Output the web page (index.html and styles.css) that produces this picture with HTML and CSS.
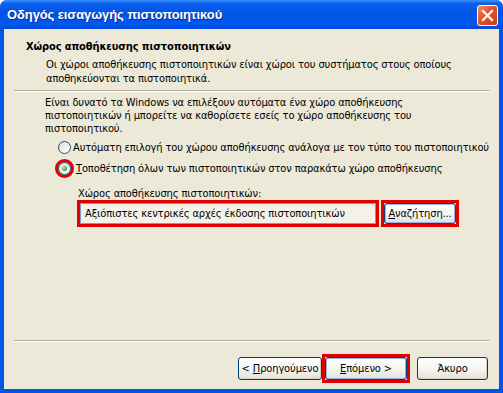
FILE: index.html
```html
<!DOCTYPE html>
<html lang="el">
<head>
  <meta charset="UTF-8">
  <title>Οδηγός εισαγωγής πιστοποιητικού</title>
  <link rel="stylesheet" href="styles.css">
</head>
<body>
  <div class="window">
    <div class="titlebar">
      <span class="title">Οδηγός εισαγωγής πιστοποιητικού</span>
      <span class="close">
        <svg width="13" height="13" viewBox="0 0 13 13">
          <path d="M2 2 L11 11 M11 2 L2 11" stroke="#fff" stroke-width="2.2" stroke-linecap="square"/>
        </svg>
      </span>
    </div>

    <div class="client">
      <div class="header">
        <h1>Χώρος αποθήκευσης πιστοποιητικών</h1>
        <p>Οι χώροι αποθήκευσης πιστοποιητικών είναι χώροι του συστήματος στους οποίους<br>αποθηκεύονται τα πιστοποιητικά.</p>
      </div>
      <div class="sep"></div>

      <div class="body">
        <p>Είναι δυνατό τα Windows να επιλέξουν αυτόματα ένα χώρο αποθήκευσης<br>πιστοποιητικών ή μπορείτε να καθορίσετε εσείς το χώρο αποθήκευσης του<br>πιστοποιητικού.</p>

        <div class="options">
          <label class="option">
            <span class="radio"></span>
            <span>Αυτόματη επιλογή του χώρου αποθήκευσης ανάλογα με τον τύπο του πιστοποιητικού</span>
          </label>
          <label class="option">
            <span class="mark round"><span class="radio checked"></span></span>
            <span><u>Τ</u>οποθέτηση όλων των πιστοποιητικών στον παρακάτω χώρο αποθήκευσης</span>
          </label>
        </div>

        <div class="store">
          <div class="store-label">Χώρος αποθήκευσης πιστοποιητικών:</div>
          <div class="store-row">
            <span class="mark"><span class="field">Αξιόπιστες κεντρικές αρχές έκδοσης πιστοποιητικών</span></span>
            <span class="mark"><button class="btn browse"><u>Α</u>ναζήτηση...</button></span>
          </div>
        </div>
      </div>

      <div class="footer">
        <div class="sep bottom"></div>
        <div class="buttons">
          <button class="btn back">&lt; <u>Π</u>ροηγούμενο</button>
          <span class="mark"><button class="btn next"><u>Ε</u>πόμενο &gt;</button></span>
          <button class="btn cancel">Άκυρο</button>
        </div>
      </div>
    </div>
  </div>
</body>
</html>
```

FILE: styles.css
```css
* {
  box-sizing: border-box;
}
body {
  margin: 0;
  background: #fff;
  font-family: "DejaVu Sans Condensed", "Liberation Sans", sans-serif;
  font-size: 11px;
  letter-spacing: -0.12px;
  color: #000;
}
.window {
  width: 503px;
  height: 393px;
  display: flex;
  flex-direction: column;
  background: #0055ea;
  border-radius: 7px 7px 0 0;
  overflow: hidden;
}
.titlebar {
  height: 29px;
  display: flex;
  align-items: center;
  justify-content: space-between;
  padding: 0 5px 0 7px;
  background: linear-gradient(to bottom, #3d95ff 0%, #0a5fee 12%, #0055e5 45%, #0058ee 85%, #0049d6 100%);
}
.title {
  color: #fff;
  font-family: "Liberation Sans", sans-serif;
  font-weight: bold;
  font-size: 13px;
  letter-spacing: -0.1px;
  text-shadow: 1px 1px 0 #0f2a8a;
}
.close {
  width: 21px;
  height: 21px;
  margin-top: 1px;
  border: 1px solid #fff;
  border-radius: 3px;
  background: linear-gradient(135deg, #f08a6a 0%, #e0542c 45%, #c63d16 100%);
  display: flex;
  align-items: center;
  justify-content: center;
}
.close svg {
  display: block;
}
.client {
  flex: 1;
  margin: 0 4px 4px;
  background: #ece9d8;
  display: flex;
  flex-direction: column;
}
.header {
  padding: 11px 0 0 22px;
}
.header h1 {
  margin: 0;
  font-size: 11px;
  line-height: 14px;
  font-weight: bold;
}
.header p {
  margin: 4px 0 0 20px;
  line-height: 14px;
}
.sep {
  height: 2px;
  margin: 4px 10px 0;
  border-top: 1px solid #aca899;
  border-bottom: 1px solid #fff;
}
.body {
  padding: 4px 0 0 41px;
}
.body p {
  margin: 0;
  line-height: 13px;
}
.options {
  margin: 4px 0 0 13px;
  display: flex;
  flex-direction: column;
  gap: 5px;
}
.option {
  display: flex;
  align-items: center;
  gap: 2px;
  height: 16px;
  white-space: nowrap;
}
.radio {
  width: 13px;
  height: 13px;
  border-radius: 50%;
  border: 1px solid #1c5180;
  background: linear-gradient(135deg, #dcdbd3 0%, #f4f3ee 60%, #fff 100%);
  display: flex;
  align-items: center;
  justify-content: center;
  flex: none;
}
.radio.checked::after {
  content: "";
  width: 5px;
  height: 5px;
  border-radius: 50%;
  background: radial-gradient(circle at 35% 35%, #a4f0a0 0%, #38b33c 60%, #21a121 100%);
}
.mark {
  display: inline-flex;
  border: 3px solid #e00000;
}
.mark.round {
  border-radius: 50%;
  margin-left: -3px;
}
.store {
  margin: 11px 0 0 33px;
}
.store-label {
  line-height: 13px;
}
.store-row {
  margin: 0 0 0 -1px;
  display: flex;
  gap: 2px;
}
.field {
  width: 296px;
  height: 21px;
  border: 1px solid #7f9db9;
  background: #f4f2e8;
  padding: 0 4px;
  line-height: 19px;
  white-space: nowrap;
}
.btn {
  font-family: inherit;
  font-size: 11px;
  letter-spacing: -0.12px;
  color: #000;
  height: 21px;
  padding: 0;
  border: 1px solid #003c74;
  border-radius: 3px;
  background: linear-gradient(to bottom, #ffffff 0%, #f3f3ef 60%, #e2e0d6 100%);
  box-shadow: inset -1px -1px 0 #d6d0c5;
}
.browse {
  width: 72px;
  border-color: #1c3a78;
  box-shadow: inset 0 0 0 1px #98b4e4;
}
.footer {
  margin-top: auto;
  padding-bottom: 6px;
}
.sep.bottom {
  margin: 0 10px;
}
.buttons {
  display: flex;
  align-items: center;
  justify-content: flex-end;
  padding: 12px 11px 0 0;
}
.buttons .btn {
  height: 23px;
}
.back {
  width: 84px;
}
.next {
  width: 82px;
  box-shadow: inset 0 0 0 1px #98b4e4;
}
.buttons .mark {
  margin: 0 7px 0 0;
}
.cancel {
  width: 71px;
}
```
